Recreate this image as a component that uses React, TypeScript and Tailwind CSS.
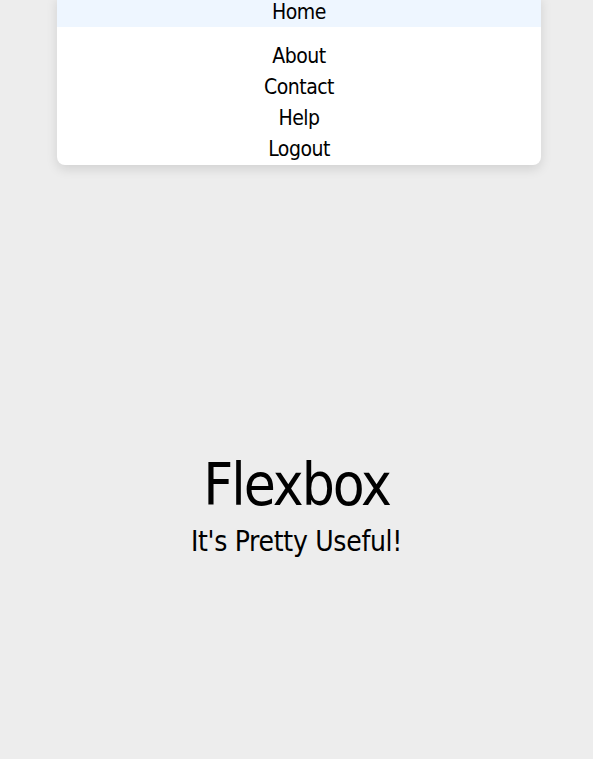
const links = ['About', 'Contact', 'Help', 'Logout'];

export default function App() {
  return (
    <div
      className="relative h-[759px] w-full overflow-hidden bg-[#ededed] text-black"
      style={{ fontFamily: '"Liberation Sans Narrow", "DejaVu Sans Condensed", sans-serif' }}
    >
      <nav className="absolute left-[57px] top-[-4px] w-[484px] rounded-b-lg bg-white shadow-[0_4px_12px_rgba(0,0,0,0.12)]">
        <div className="flex h-[31px] items-center justify-center bg-[#eef6ff] pt-[2px] text-[21px] leading-[31px] tracking-[-0.5px]">Home</div>
        <ul className="mt-[14px] flex flex-col items-center text-[21px] leading-[31px] tracking-[-0.5px]">
          {links.map((l) => (
            <li key={l}>{l}</li>
          ))}
        </ul>
      </nav>

      <div className="flex h-full flex-col items-center pt-[447px]">
        <h1 className="text-[58px] leading-[76px] tracking-[-2px]">Flexbox</h1>
        <p className="pt-[1px] text-[28px] leading-[36px] tracking-[-0.3px]">It's Pretty Useful!</p>
      </div>
    </div>
  );
}
